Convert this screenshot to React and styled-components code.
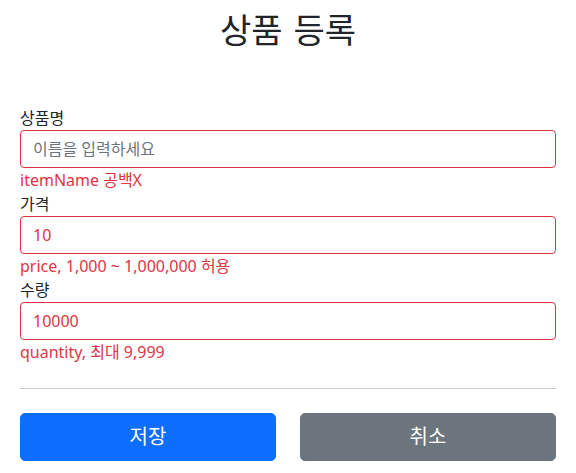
import React from "react";
import styled, { createGlobalStyle } from "styled-components";

const GlobalStyle = createGlobalStyle`
  * { box-sizing: border-box; }
  body {
    margin: 0;
    background: #ffffff;
    color: #212529;
    font-family: "Noto Sans", "Noto Sans CJK KR", sans-serif;
    font-size: 16px;
    line-height: 1.5;
  }
`;

const Container = styled.div`
  max-width: 560px;
  margin: 0 auto;
  padding: 0 12px;
`;

const Header = styled.div`
  padding-top: 10px;
  padding-bottom: 56px;
  text-align: center;
`;

const Title = styled.h2`
  margin: 0;
  font-size: 34px;
  font-weight: 400;
  line-height: 40px;
  word-spacing: 2px;
`;

const Field = styled.div`
  display: flex;
  flex-direction: column;
`;

const Label = styled.label`
  display: block;
  color: #212529;
`;

const Input = styled.input`
  display: block;
  width: 100%;
  height: 38px;
  padding: 6px 12px;
  font: inherit;
  color: #dc3545;
  border: 1px solid #dc3545;
  border-radius: 4px;
  background: #fff;
  outline: none;

  &::placeholder {
    color: #6c757d;
  }
`;

const FieldError = styled.div`
  color: #dc3545;
`;

const Divider = styled.hr`
  margin: 24px 0;
  border: 0;
  border-top: 1px solid #212529;
  opacity: 0.25;
`;

const ButtonRow = styled.div`
  display: grid;
  grid-template-columns: 1fr 1fr;
  column-gap: 24px;
`;

const Button = styled.button`
  height: 48px;
  width: 100%;
  border: 1px solid ${props => (props.secondary ? "#6c757d" : "#0d6efd")};
  background: ${props => (props.secondary ? "#6c757d" : "#0d6efd")};
  color: #ffffff;
  font: inherit;
  font-size: 20px;
  border-radius: 5px;
  cursor: pointer;
`;

const fields = [
  { label: "상품명", placeholder: "이름을 입력하세요", value: "", error: "itemName 공백X" },
  { label: "가격", placeholder: "가격을 입력하세요", value: "10", error: "price, 1,000 ~ 1,000,000 허용" },
  { label: "수량", placeholder: "수량을 입력하세요", value: "10000", error: "quantity, 최대 9,999" },
];

const App = () => {
  return (
    <>
      <GlobalStyle />
      <Container>
        <Header>
          <Title>상품 등록</Title>
        </Header>
        <form onSubmit={e => e.preventDefault()}>
          {fields.map(f => (
            <Field key={f.label}>
              <Label>{f.label}</Label>
              <Input placeholder={f.placeholder} defaultValue={f.value} />
              <FieldError>{f.error}</FieldError>
            </Field>
          ))}
          <Divider />
          <ButtonRow>
            <Button type="submit">저장</Button>
            <Button type="button" secondary>취소</Button>
          </ButtonRow>
        </form>
      </Container>
    </>
  );
};

export default App;
